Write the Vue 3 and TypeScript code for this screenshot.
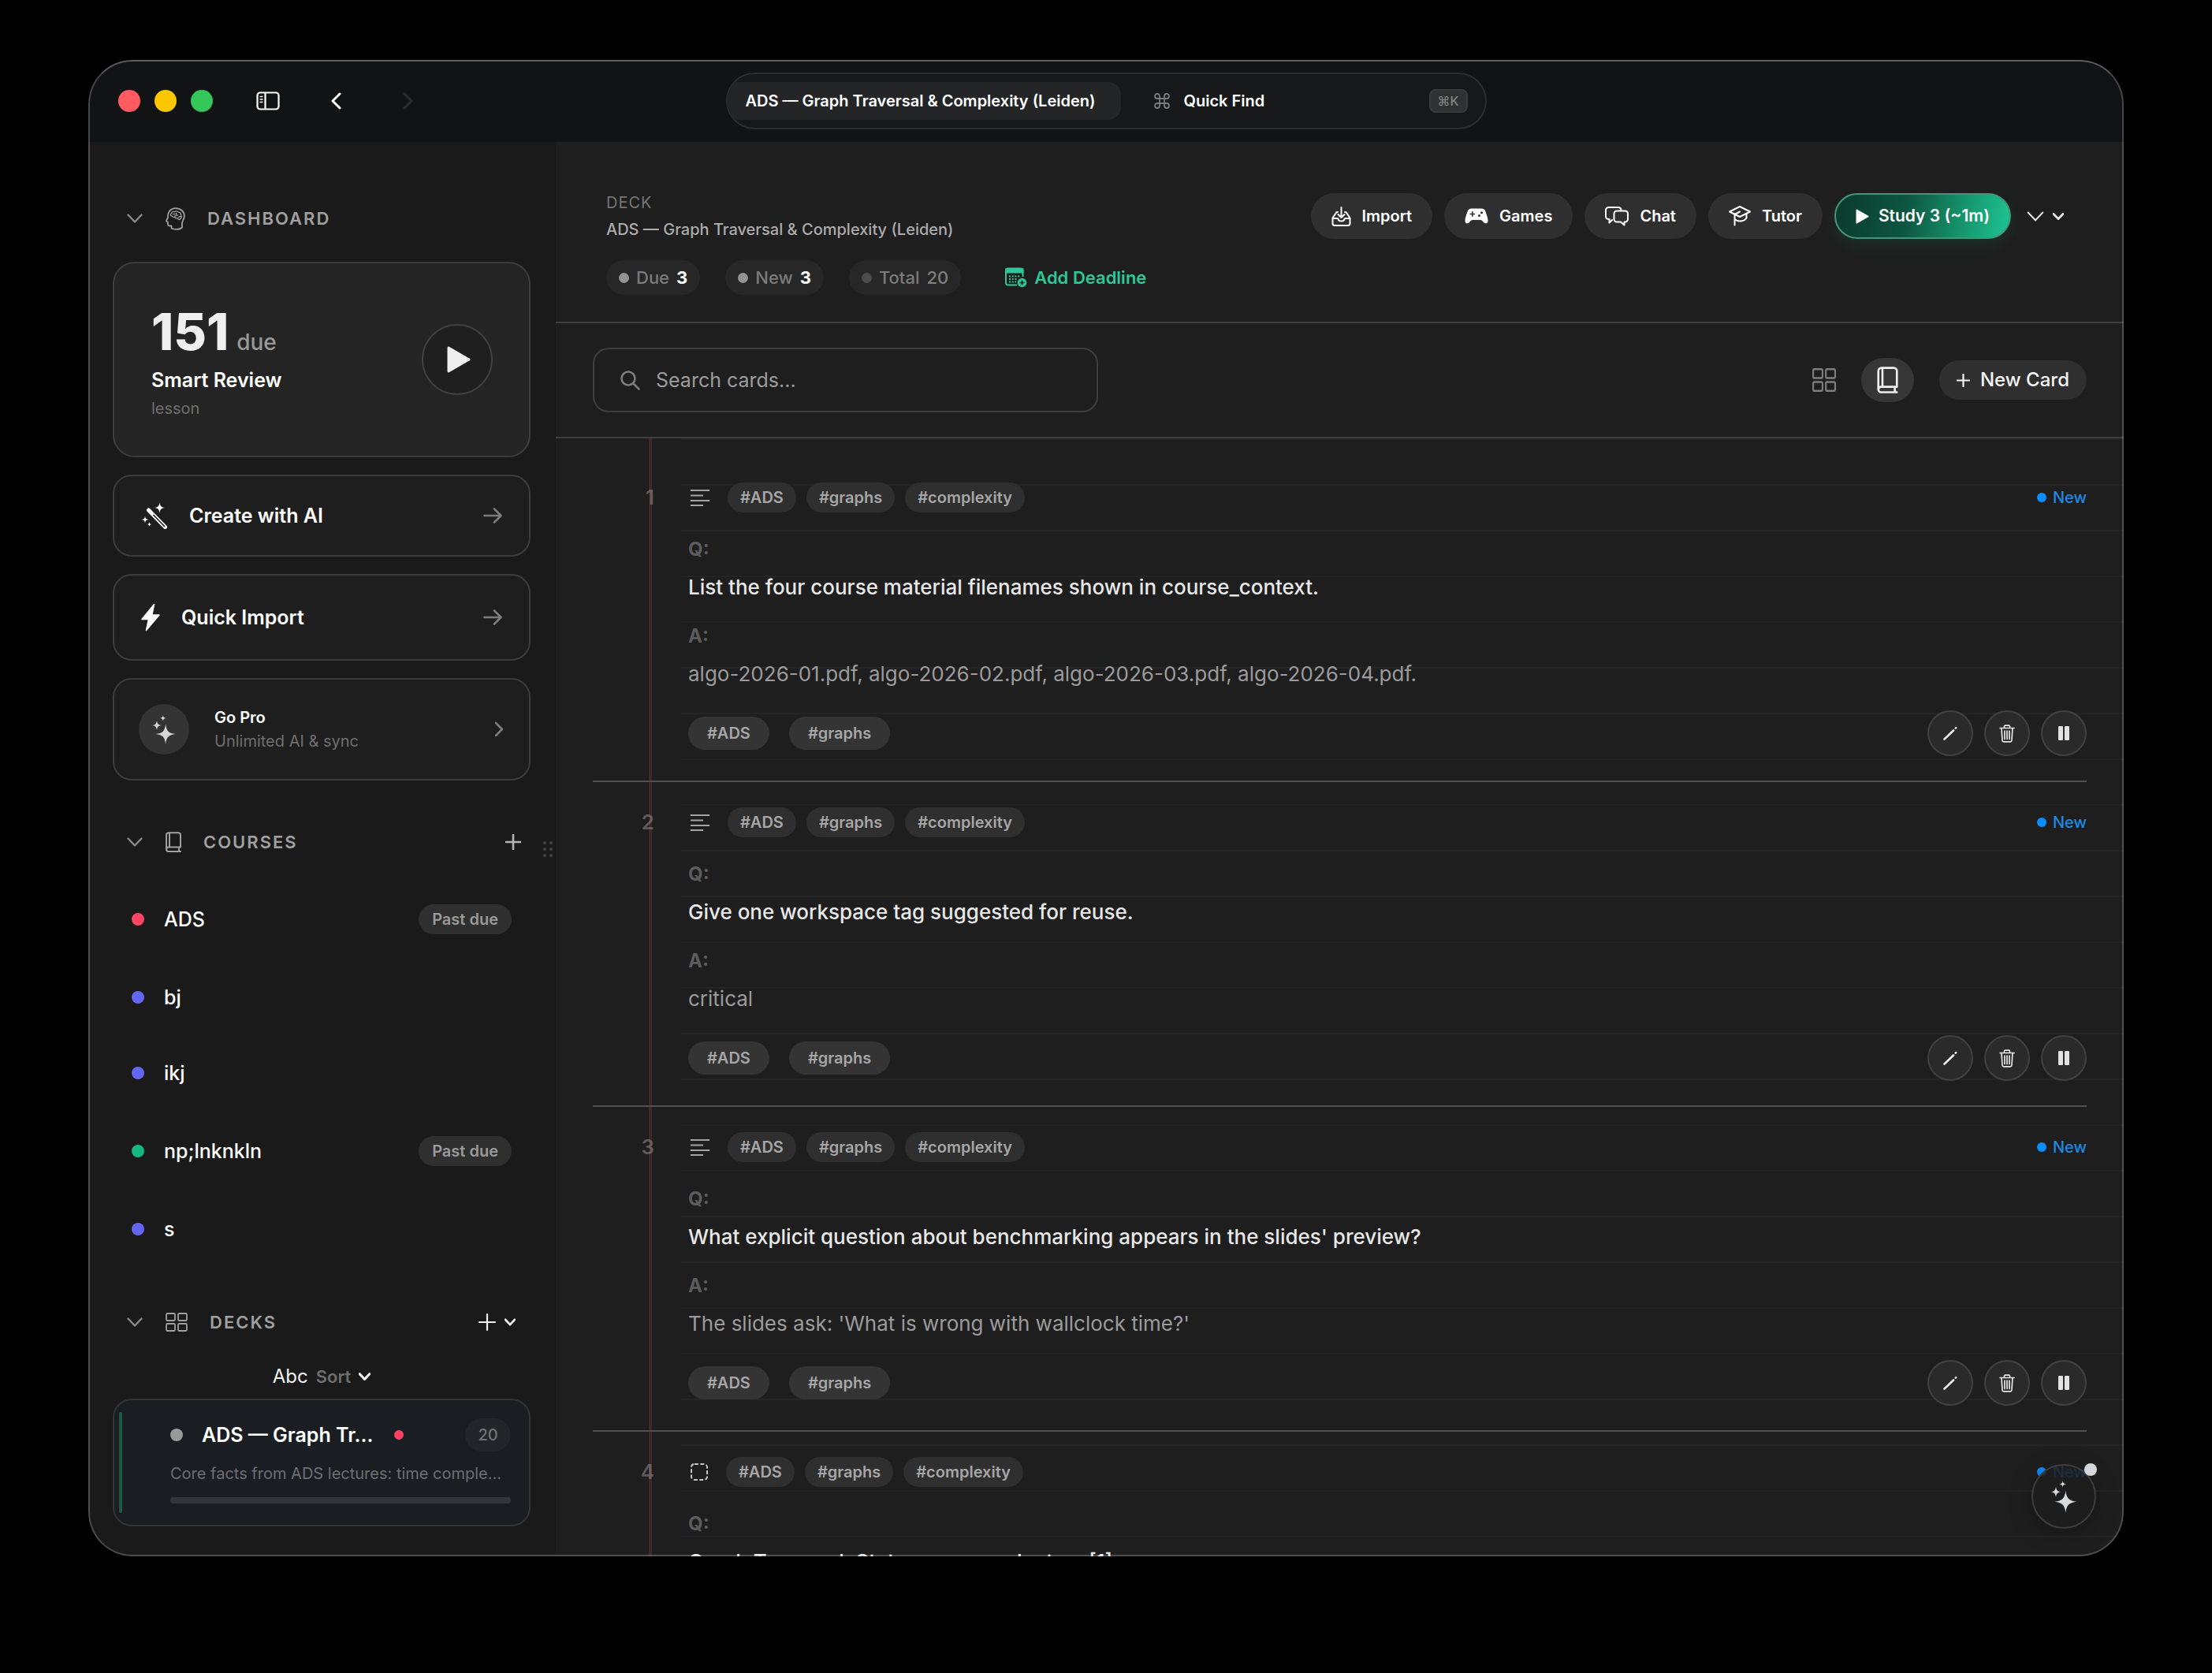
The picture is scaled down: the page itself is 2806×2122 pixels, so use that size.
<script setup lang="ts">
import { ref } from 'vue'

interface Course {
  name: string
  color: string
  pastDue?: boolean
}

interface Card {
  kind: 'basic' | 'cloze'
  question: string
  answer?: string
}

const deckTitle = 'ADS — Graph Traversal & Complexity (Leiden)'
const query = ref('')

const courses: Course[] = [
  { name: 'ADS', color: '#fb4562', pastDue: true },
  { name: 'bj', color: '#6466f1' },
  { name: 'ikj', color: '#6466f1' },
  { name: 'np;lnknkln', color: '#14b981', pastDue: true },
  { name: 's', color: '#6466f1' },
]

const headTags = ['#ADS', '#graphs', '#complexity']
const footTags = ['#ADS', '#graphs']

const cards: Card[] = [
  {
    kind: 'basic',
    question: 'List the four course material filenames shown in course_context.',
    answer: 'algo-2026-01.pdf, algo-2026-02.pdf, algo-2026-03.pdf, algo-2026-04.pdf.',
  },
  { kind: 'basic', question: 'Give one workspace tag suggested for reuse.', answer: 'critical' },
  {
    kind: 'basic',
    question: "What explicit question about benchmarking appears in the slides' preview?",
    answer: "The slides ask: 'What is wrong with wallclock time?'",
  },
  { kind: 'cloze', question: 'Graph Traversal: State space product on [1]' },
]
</script>

<template>
  <div class="desktop">
    <svg class="defs" aria-hidden="true">
      <symbol id="sparkles" viewBox="0 0 100 123">
        <path d="M57 38C61 68 69 76 99 80C69 84 61 92 57 122C53 92 45 84 15 80C45 76 53 68 57 38Z" />
        <path d="M20 23C22 37 26 41 40 43C26 45 22 49 20 63C18 49 14 45 0 43C14 41 18 37 20 23Z" />
        <path d="M46 0C47 9 50 12 59 13C50 14 47 17 46 26C45 17 42 14 33 13C42 12 45 9 46 0Z" />
      </symbol>
      <symbol id="book" viewBox="0 0 20 26">
        <path
          d="M4 1.2H16a3 3 0 0 1 3 3V19.6H4a3 3 0 0 0-3 2.7V4.2a3 3 0 0 1 3-3zM1 22.3A2.6 2.6 0 0 0 3.6 24.9H19M17.6 19.8c-1 1.600-1 3.400.2 5M5 1.400V19.400"
          fill="none" stroke="currentColor" stroke-linecap="round" stroke-linejoin="round"
        />
      </symbol>
      <symbol id="grid" viewBox="0 0 28 24" preserveAspectRatio="none">
        <g fill="none" stroke="currentColor">
          <rect x="1" y="1" width="11" height="9" rx="1.500" /><rect x="16" y="1" width="11" height="9" rx="1.500" />
          <rect x="1" y="14" width="11" height="9" rx="1.500" /><rect x="16" y="14" width="11" height="9" rx="1.500" />
        </g>
      </symbol>
      <symbol id="chevron" viewBox="0 0 20 12">
        <path d="M1.500 1.500L10 10.500L18.500 1.500" fill="none" stroke="currentColor" stroke-linecap="round" stroke-linejoin="round" />
      </symbol>
      <symbol id="arrow" viewBox="0 0 24 20">
        <path d="M1.500 10H22M14 1.500L22.500 10L14 18.500" fill="none" stroke="currentColor" stroke-width="2.600" stroke-linecap="round" stroke-linejoin="round" />
      </symbol>
      <symbol id="plus" viewBox="0 0 20 20">
        <path d="M10 1V19M1 10H19" fill="none" stroke="currentColor" stroke-linecap="round" />
      </symbol>
    </svg>

    <div class="window">
      <header class="titlebar">
        <div class="controls">
          <div class="lights">
            <button class="light red" aria-label="Close"></button>
            <button class="light yellow" aria-label="Minimise"></button>
            <button class="light green" aria-label="Zoom"></button>
          </div>
          <button class="plain panel" aria-label="Toggle sidebar">
            <svg width="30" height="24" viewBox="0 0 30 24" fill="none" stroke="#fff" stroke-width="2.200">
              <rect x="1.500" y="1.500" width="27" height="21" rx="3.500" /><path d="M11.500 2V22" />
              <path d="M4.500 6.500H8.500M4.500 10H8.500M4.500 13.500H8.500" stroke-width="1.600" />
            </svg>
          </button>
          <button class="plain back" aria-label="Back">
            <svg width="14" height="22" viewBox="0 0 14 22" fill="none" stroke="#fff" stroke-width="3" stroke-linecap="round" stroke-linejoin="round"><path d="M12 2L3 11L12 20" /></svg>
          </button>
          <button class="plain forward" aria-label="Forward">
            <svg width="14" height="22" viewBox="0 0 14 22" fill="none" stroke="#2b2c2e" stroke-width="3" stroke-linecap="round" stroke-linejoin="round"><path d="M2 2L11 11L2 20" /></svg>
          </button>
        </div>

        <div class="capsule">
          <button class="tab">{{ deckTitle }}</button>
          <button class="quick">
            <svg width="20" height="20" viewBox="0 0 20 20" fill="none" stroke="#7a7b7c" stroke-width="1.800">
              <path d="M7 7V4a3 3 0 1 0-3 3H16a3 3 0 1 0-3-3V16a3 3 0 1 0 3-3H4a3 3 0 1 0 3 3V7" />
            </svg>
            <span>Quick Find</span>
            <kbd>⌘K</kbd>
          </button>
        </div>
      </header>

      <div class="body">
        <aside class="sidebar">
          <h2 class="section dash">
            <svg class="caret" width="20" height="12" stroke-width="2.400"><use href="#chevron" /></svg>
            <svg width="25" height="29" viewBox="0 0 25 29" fill="none" stroke="currentColor" stroke-width="1.800" stroke-linejoin="round" stroke-linecap="round">
              <path d="M7.500 23.500H5C3.600 23.500 3 22.700 3 21.600V18.800L1.500 18C1 17.600 1 17 1.300 16.400L3 12.800C2.400 6 6.300 1.200 13 1.200C19.300 1.200 23.800 5.400 23.800 11C23.800 15.200 21 17 21 20.500V25.500C19.500 27 17 27.800 14 27.800C11 27.800 8.500 27.200 7.500 26.400Z" />
              <path d="M7.500 10.800C5.800 10.300 6 8 7.600 7.600C7.800 5.600 10 4.800 11.500 5.800C13 4.500 15.500 4.700 16.300 6.200C18.300 6.200 19.800 7.800 19.400 9.800C20.700 11 20.500 13.400 18.900 14.200C18.700 15.400 17.600 15.800 16.700 15.200C15.500 15 15.300 13.600 14.300 13.400C13 14 11.800 13.400 11.700 12.200C10 12.600 8.600 12 7.500 10.800ZM9.500 8.600H12M13.500 7.500C13.200 9 14 10 15.300 10M11.700 12.200C11.700 11 12.500 10.500 13.300 10.600M16.500 12.600C17 11.600 18 11.400 18.900 11.700" stroke-width="1.300" />
            </svg>
            <span>DASHBOARD</span>
          </h2>

          <div class="stack">
            <section class="panel-card review">
              <div class="review-text">
                <p class="count"><strong>151</strong><span>due</span></p>
                <h3>Smart Review</h3>
                <p class="hint">lesson</p>
              </div>
              <button class="play" aria-label="Start review">
                <svg width="32" height="36" viewBox="0 0 32 36" fill="#efefef" stroke="#efefef" stroke-width="3" stroke-linejoin="round"><path d="M3 3L29 18L3 33Z" /></svg>
              </button>
            </section>

            <button class="panel-card action create">
              <svg width="34" height="34" viewBox="0 0 34 34" fill="#fff">
                <path d="M9.500 10L30.500 31.500" stroke="#fff" stroke-width="5" stroke-linecap="round" />
                <path d="M15.500 16L30 31" stroke="#1e1e1e" stroke-width="1.600" />
                <path d="M23.500 0C24.200 5 25.200 6.200 30 7C25.200 7.800 24.200 9 23.500 14C22.800 9 21.800 7.800 17 7C21.800 6.200 22.800 5 23.500 0Z" />
                <path d="M5 17.500C5.500 20.800 6.200 21.500 9.500 22C6.200 22.500 5.500 23.200 5 26.500C4.500 23.200 3.800 22.500.5 22C3.800 21.500 4.500 20.800 5 17.500Z" />
                <path d="M10.500 25C10.800 27.200 11.300 27.700 13.500 28C11.300 28.300 10.800 28.800 10.500 31C10.200 28.800 9.700 28.300 7.500 28C9.700 27.700 10.200 27.200 10.500 25Z" />
              </svg>
              <span>Create with AI</span>
              <svg class="end" width="24" height="20"><use href="#arrow" /></svg>
            </button>

            <button class="panel-card action import">
              <svg width="24" height="36" viewBox="0 0 24 36" fill="#fff" stroke="#fff" stroke-width="1.500" stroke-linejoin="round"><path d="M16.500 1.500L1 20.500H9.500L6.500 34.500L23 15H13.800Z" /></svg>
              <span>Quick Import</span>
              <svg class="end" width="24" height="20"><use href="#arrow" /></svg>
            </button>

            <button class="panel-card pro">
              <span class="pro-icon"><svg width="30" height="37"><use href="#sparkles" /></svg></span>
              <span class="pro-text"><b>Go Pro</b><small>Unlimited AI &amp; sync</small></span>
              <svg class="end" width="12" height="20" viewBox="0 0 12 20" fill="none" stroke="currentColor" stroke-width="2.600" stroke-linecap="round" stroke-linejoin="round"><path d="M2 2L10 10L2 18" /></svg>
            </button>
          </div>

          <h2 class="section courses-head">
            <svg class="caret" width="20" height="12" stroke-width="2.400"><use href="#chevron" /></svg>
            <svg width="20" height="26" stroke-width="2"><use href="#book" /></svg>
            <span>COURSES</span>
            <button class="plain end" aria-label="Add course"><svg width="20" height="20" stroke-width="2.600"><use href="#plus" /></svg></button>
          </h2>
          <ul class="courses">
            <li v-for="c in courses" :key="c.name">
              <button class="course" :class="{ tall: c.pastDue }">
                <i class="dot" :style="{ background: c.color }"></i>
                <span>{{ c.name }}</span>
                <em v-if="c.pastDue">Past due</em>
              </button>
            </li>
          </ul>

          <h2 class="section decks-head">
            <svg class="caret" width="20" height="12" stroke-width="2.400"><use href="#chevron" /></svg>
            <svg width="28" height="24" stroke-width="1.800"><use href="#grid" /></svg>
            <span>DECKS</span>
            <button class="plain end add-deck" aria-label="Add deck">
              <svg width="22" height="22" stroke-width="2"><use href="#plus" /></svg>
              <svg width="14" height="10" stroke-width="4"><use href="#chevron" /></svg>
            </button>
          </h2>
          <button class="plain sort">
            <span class="abc">Abc</span><b>Sort</b>
            <svg width="15" height="10" stroke-width="4"><use href="#chevron" /></svg>
          </button>
          <button class="deck">
            <i class="bar"></i>
            <span class="deck-body">
              <span class="deck-row">
                <i class="dot grey"></i>
                <b>ADS — Graph Tr…</b>
                <i class="dot alert"></i>
                <em>20</em>
              </span>
              <span class="deck-desc">Core facts from ADS lectures: time comple…</span>
              <span class="track"></span>
            </span>
          </button>

          <div class="grip" role="separator" aria-label="Resize sidebar"><i v-for="n in 6" :key="n"></i></div>
        </aside>

        <main class="main">
          <header class="deck-header">
            <div>
              <p class="eyebrow">DECK</p>
              <h1>{{ deckTitle }}</h1>
              <div class="stats">
                <span class="stat"><i></i>Due <b>3</b></span>
                <span class="stat"><i></i>New <b>3</b></span>
                <span class="stat dim"><i></i>Total <b>20</b></span>
                <button class="deadline">
                  <svg width="28" height="26" viewBox="0 0 28 26" fill="none" stroke="currentColor" stroke-width="2">
                    <path d="M22.500 12V4.500A3 3 0 0 0 19.500 1.500H4A3 3 0 0 0 1 4.500V19.500A3 3 0 0 0 4 22.500H15" />
                    <path d="M1 2.500H22.500V6.500H1Z" fill="currentColor" />
                    <path d="M5 11.500H19M5 15H15M5 18.500H14" stroke-dasharray="2 1.700" />
                    <circle cx="21.500" cy="19.500" r="5.800" fill="currentColor" stroke="none" />
                    <path d="M21.500 16.500V22.500M18.500 19.500H24.500" stroke="#1e1e1e" stroke-width="1.600" />
                  </svg>
                  Add Deadline
                </button>
              </div>
            </div>

            <nav class="actions" aria-label="Deck actions">
              <button class="pill">
                <svg width="25" height="25" viewBox="0 0 25 25" fill="none" stroke="currentColor" stroke-width="2" stroke-linecap="round" stroke-linejoin="round">
                  <path d="M12.500 1V13.500M8.500 10L12.500 14L16.500 10M8 7H6.500L1.500 14.500V21.500A2.400 2.400 0 0 0 4 24H21A2.400 2.400 0 0 0 23.500 21.500V14.500L18.500 7H17M1.500 15H7.500C8.300 15 8.500 15.600 8.500 16C9 17.800 10.500 18.600 12.500 18.600C14.500 18.600 16 17.800 16.500 16C16.500 15.600 16.700 15 17.500 15H23.500" />
                </svg>
                Import
              </button>
              <button class="pill">
                <svg width="30" height="20" viewBox="0 0 30 20" fill="currentColor" fill-rule="evenodd">
                  <path d="M9 .5H21C24 .5 25.500 1.500 26.500 4.500C28.200 9.200 29.800 14 29.500 16.500C29.200 19.800 26 20.200 24 18C22.500 16.200 21.500 15 20 15H10C8.500 15 7.500 16.200 6 18C4 20.200.8 19.800.5 16.500C.2 14 1.800 9.200 3.500 4.500C4.500 1.500 6 .5 9 .5ZM9 4.200V6.700H6.500V8.300H9V10.800H10.600V8.300H13.100V6.700H10.600V4.200ZM21.500 4.200A1.500 1.500 0 1 0 21.500 7.200A1.500 1.500 0 1 0 21.500 4.200ZM18.500 8A1.500 1.500 0 1 0 18.500 11A1.500 1.500 0 1 0 18.500 8Z" />
                </svg>
                Games
              </button>
              <button class="pill">
                <svg width="30" height="25" viewBox="0 0 30 25" fill="none" stroke="currentColor" stroke-width="2" stroke-linecap="round" stroke-linejoin="round">
                  <path d="M9 17L5.500 20.500V16H4.500A3.500 3.500 0 0 1 1 12.500V4.500A3.500 3.500 0 0 1 4.500 1H17A3.500 3.500 0 0 1 20.500 4.500" />
                  <path d="M15 5.500H25.500A3.500 3.500 0 0 1 29 9V16A3.500 3.500 0 0 1 25.500 19.500H24.500V23.500L20 19.500H15A3.500 3.500 0 0 1 11.500 16V9A3.500 3.500 0 0 1 15 5.500Z" />
                </svg>
                Chat
              </button>
              <button class="pill">
                <svg width="28" height="26" viewBox="0 0 28 26" fill="none" stroke="currentColor" stroke-width="2" stroke-linecap="round" stroke-linejoin="round">
                  <path d="M14 1L27 7.500L14 14L1 7.500ZM14 7.500L7.500 11V24.500M7.500 17C9.500 18.800 11.500 19.500 14 19.500C18 19.500 21 18 22.500 15.500V10" />
                </svg>
                Tutor
              </button>
              <button class="pill study">
                <svg width="17" height="19" viewBox="0 0 17 19" fill="currentColor" stroke="currentColor" stroke-width="2" stroke-linejoin="round"><path d="M1.500 1.500L15.500 9.500L1.500 17.500Z" /></svg>
                Study 3 (~1m)
              </button>
              <button class="plain more" aria-label="More actions">
                <svg width="22" height="13" stroke-width="2"><use href="#chevron" /></svg>
                <svg width="14" height="9" stroke-width="4"><use href="#chevron" /></svg>
              </button>
            </nav>
          </header>

          <div class="toolbar">
            <label class="search">
              <svg width="25" height="25" viewBox="0 0 25 25" fill="none" stroke="#7d7d7d" stroke-width="2.600" stroke-linecap="round"><circle cx="10" cy="10" r="8.500" /><path d="M16.500 16.500L23.500 23.500" /></svg>
              <input v-model="query" type="search" placeholder="Search cards..." aria-label="Search cards" />
            </label>
            <div class="views">
              <button class="plain grid-view" aria-label="Grid view"><svg width="30" height="30" stroke-width="2"><use href="#grid" /></svg></button>
              <button class="book-view" aria-label="Notebook view"><svg width="27" height="34" stroke-width="2"><use href="#book" /></svg></button>
              <button class="new-card"><svg width="17" height="17" stroke-width="2.600"><use href="#plus" /></svg>New Card</button>
            </div>
          </div>

          <ol class="notebook">
            <li v-for="(card, i) in cards" :key="i" class="entry">
              <span class="num">{{ i + 1 }}</span>
              <article>
                <div class="entry-head">
                  <svg v-if="card.kind === 'basic'" class="kind" width="28" height="22" viewBox="0 0 28 22" stroke="#a3a3a3" stroke-width="2"><path d="M3 2H27M3 8.500H19M3 15H27M3 21H19" /></svg>
                  <svg v-else class="kind" width="26" height="24" viewBox="0 0 26 24" fill="none" stroke="#c4c4c4" stroke-width="2"><rect x="4" y="2" width="20" height="20" rx="4" stroke-dasharray="5 2.400" /></svg>
                  <span v-for="t in headTags" :key="t" class="tag">{{ t }}</span>
                  <span class="state"><i></i>New</span>
                </div>
                <p class="mark">Q:</p>
                <h3 class="question">{{ card.question }}</h3>
                <template v-if="card.answer">
                  <p class="mark second">A:</p>
                  <p class="answer">{{ card.answer }}</p>
                  <div class="entry-foot">
                    <span v-for="t in footTags" :key="t" class="tag big">{{ t }}</span>
                    <div class="tools">
                      <button aria-label="Edit card"><svg width="18" height="18" viewBox="0 0 18 18" stroke="#f0f0f0" stroke-width="2.600" stroke-linecap="round"><path d="M1.500 16.500L13 5.500M15.800 2.600L16.200 2.200" /></svg></button>
                      <button aria-label="Delete card">
                        <svg width="20" height="23" viewBox="0 0 20 23" fill="none" stroke="#e6e6e6" stroke-width="1.700" stroke-linecap="round" stroke-linejoin="round">
                          <path d="M1 4.500H19M6.500 4.500V2.500A1.300 1.300 0 0 1 7.800 1.200H12.200A1.300 1.300 0 0 1 13.500 2.500V4.500M3 4.500L4 20A2 2 0 0 0 6 21.800H14A2 2 0 0 0 16 20L17 4.500M7 8V18.500M10 8V18.500M13 8V18.500" />
                        </svg>
                      </button>
                      <button aria-label="Suspend card"><svg width="14" height="18" viewBox="0 0 14 18" fill="#e2e2e2"><rect width="6" height="18" rx="1.200" /><rect x="8" width="6" height="18" rx="1.200" /></svg></button>
                    </div>
                  </div>
                </template>
              </article>
            </li>
          </ol>
        </main>
      </div>

      <button class="fab" aria-label="AI assistant">
        <svg width="34" height="41"><use href="#sparkles" /></svg>
        <i></i>
      </button>
    </div>
  </div>
</template>

<style>
body {
  margin: 0;
  background: #000;
}
</style>

<style scoped>
* {
  box-sizing: border-box;
}
button {
  margin: 0;
  padding: 0;
  border: 0;
  background: none;
  color: inherit;
  font: inherit;
  cursor: pointer;
}
h1, h2, h3, p, ul, ol {
  margin: 0;
  padding: 0;
  list-style: none;
}
svg {
  display: block;
  flex: none;
}
i, em {
  font-style: normal;
}
.defs {
  position: absolute;
  width: 0;
  height: 0;
}
.desktop {
  height: 100vh;
  padding: 76px 112px 148px;
  background: #000;
  color: #fff;
  font: 400 20px/28px Inter, "Liberation Sans", sans-serif;
}
.window {
  position: relative;
  display: flex;
  flex-direction: column;
  height: 100%;
  overflow: hidden;
  border-radius: 56px;
  background: #1e1e1e;
}
.window::after {
  content: "";
  position: absolute;
  inset: 0;
  border: 2px solid rgba(255, 255, 255, 0.22);
  border-top-color: rgba(255, 255, 255, 0.32);
  border-radius: 56px;
  pointer-events: none;
}

/* Title bar */
.titlebar {
  flex: none;
  display: grid;
  grid-template-columns: 1fr minmax(0, 965px) 1fr;
  align-items: center;
  height: 104px;
  background: #121315;
}
.controls {
  display: flex;
  align-items: center;
  padding-left: 38px;
}
.lights {
  display: flex;
  gap: 18px;
}
.light {
  width: 28px;
  height: 28px;
  border-radius: 50%;
}
.red { background: #ff5b60; }
.yellow { background: #fbc800; }
.green { background: #35c759; }
.panel { margin-left: 55px; }
.back { margin-left: 64px; }
.forward { margin-left: 78px; }
.capsule {
  display: flex;
  align-items: center;
  height: 72px;
  overflow: hidden;
  border: 2px solid #2b2d2f;
  border-radius: 36px;
  background: #16181a;
  font-weight: 600;
}
.tab {
  height: 48px;
  padding: 0 32px 0 23px;
  border-radius: 0 16px 16px 0;
  background: #232527;
  white-space: nowrap;
}
.quick {
  flex: 1;
  display: flex;
  align-items: center;
  gap: 18px;
  padding: 0 22px 0 42px;
}
kbd {
  margin-left: auto;
  width: 49px;
  height: 30px;
  border: 2px solid #3a3b3d;
  border-radius: 8px;
  background: #303133;
  color: #818284;
  font: 500 16px/26px Inter, "DejaVu Sans", sans-serif;
  text-align: center;
}

.body {
  flex: 1;
  display: flex;
  min-height: 0;
}

/* Sidebar */
.sidebar {
  position: relative;
  flex: none;
  display: flex;
  flex-direction: column;
  width: 593px;
  padding: 0 32px 0 31px;
  background: #1a1a1a;
}
.section {
  flex: none;
  display: flex;
  align-items: center;
  height: 54px;
  padding: 0 12px 0 18px;
  color: #a0a0a0;
  font-size: 22px;
  font-weight: 600;
  letter-spacing: 2px;
}
.section > span {
  margin-left: 28px;
}
.caret {
  margin-right: 29px;
  color: #8a8a8a;
}
.end {
  margin-left: auto;
}
.dash { margin: 70px 0 28px; }
.courses-head { margin: 51px 0 20px; }
.decks-head { margin: 43px 0 22px; }
.courses-head .end { color: #b5b5b5; }
.add-deck {
  display: flex;
  align-items: center;
  gap: 11px;
  padding-right: 7px;
  color: #f0f0f0;
}
.stack {
  display: flex;
  flex-direction: column;
  gap: 22px;
}
.panel-card {
  display: flex;
  align-items: center;
  border: 2px solid #3d3d3d;
  border-radius: 24px;
  background: #1e1e1e;
  text-align: left;
}
.review {
  justify-content: space-between;
  height: 248px;
  padding: 0 46px 0 47px;
  border-radius: 28px;
  background: #242424;
}
.review-text {
  padding-top: 8px;
}
.count {
  display: flex;
  align-items: baseline;
  gap: 10px;
  line-height: 64px;
}
.count strong {
  color: #efefef;
  font-size: 64px;
  font-weight: 800;
}
.count span {
  color: #999;
  font-size: 28px;
  font-weight: 500;
}
.review h3 {
  font-size: 25px;
  line-height: 32px;
  font-weight: 600;
}
.hint {
  margin-top: 6px;
  color: #6f6f6f;
}
.play {
  display: flex;
  align-items: center;
  justify-content: center;
  width: 90px;
  height: 90px;
  padding-left: 4px;
  border: 2px solid #404040;
  border-radius: 50%;
  background: #1f1f1f;
}
.action {
  padding: 0 34px;
  font-size: 25px;
  font-weight: 600;
}
.create { height: 104px; }
.import { height: 110px; }
.action span {
  margin-left: 27px;
}
.action .end {
  color: #7c7c7c;
}
.pro {
  height: 130px;
  padding: 0 32px 0 31px;
}
.pro-icon {
  display: flex;
  align-items: center;
  justify-content: center;
  width: 64px;
  height: 64px;
  border-radius: 50%;
  background: #343434;
  fill: #d6d6d6;
}
.pro-text {
  display: flex;
  flex-direction: column;
  gap: 2px;
  margin-left: 32px;
}
.pro-text b {
  font-weight: 600;
}
.pro-text small {
  color: #6f6f6f;
  font-size: 20px;
}
.pro .end {
  color: #7c7c7c;
}
.course {
  display: flex;
  align-items: center;
  width: 100%;
  height: 96px;
  padding: 0 24px;
  font-size: 25px;
  font-weight: 500;
}
.course.tall {
  height: 102px;
}
.course span {
  margin-left: 25px;
}
.dot {
  flex: none;
  width: 16px;
  height: 16px;
  border-radius: 50%;
}
.course em {
  margin-left: auto;
  padding: 0 17px;
  border-radius: 19px;
  background: #2f2f2f;
  color: #9a9a9a;
  font-size: 20px;
  line-height: 38px;
  font-weight: 600;
}
.sort {
  display: flex;
  align-items: center;
  align-self: center;
  gap: 10px;
  height: 40px;
  color: #f0f0f0;
}
.abc {
  font-size: 24px;
}
.sort b {
  color: #6e6e6e;
  font-size: 22px;
  font-weight: 600;
}
.deck {
  flex: none;
  display: flex;
  gap: 61px;
  height: 162px;
  margin-top: 8px;
  padding: 15px 23px 15px 6px;
  border: 2px solid #333537;
  border-radius: 24px;
  background: #1a1d21;
  text-align: left;
}
.bar {
  flex: none;
  width: 4px;
  height: 128px;
  border-radius: 2px;
  background: #1b5a45;
}
.deck-body {
  flex: 1;
  display: flex;
  flex-direction: column;
  padding-top: 8px;
}
.deck-row {
  display: flex;
  align-items: center;
  height: 42px;
}
.deck-row b {
  margin: 0 27px 0 24px;
  font-size: 25px;
  font-weight: 600;
}
.deck-row em {
  margin-left: auto;
  width: 58px;
  border-radius: 21px;
  background: #22262a;
  color: #707376;
  line-height: 42px;
  font-weight: 500;
  text-align: center;
}
.grey { background: #999; }
.alert {
  width: 12px;
  height: 12px;
  background: #fb4160;
}
.deck-desc {
  margin-top: 14px;
  color: #6c6f73;
  white-space: nowrap;
}
.track {
  height: 8px;
  margin-top: 16px;
  border-radius: 4px;
  background: #32353a;
}
.grip {
  position: absolute;
  top: 50%;
  right: 4px;
  display: grid;
  grid-template-columns: 4px 4px;
  gap: 4px;
  transform: translateY(-50%);
}
.grip i {
  width: 4px;
  height: 4px;
  border-radius: 50%;
  background: #444;
}

/* Deck header */
.main {
  flex: 1;
  display: flex;
  flex-direction: column;
  min-width: 0;
}
.deck-header {
  flex: none;
  display: flex;
  align-items: flex-start;
  justify-content: space-between;
  height: 230px;
  padding: 63px 76px 0 64px;
  border-bottom: 2px solid #3f3f3f;
}
.eyebrow {
  color: #757575;
  letter-spacing: 1px;
}
h1 {
  margin-top: 6px;
  color: #acacac;
  font-size: 20px;
  font-weight: 500;
}
.stats {
  display: flex;
  gap: 32px;
  margin-top: 25px;
}
.stat {
  display: flex;
  align-items: center;
  gap: 9px;
  height: 44px;
  padding: 0 16px;
  border-radius: 22px;
  background: #272727;
  color: #7b7b7b;
  font-size: 22px;
  font-weight: 500;
}
.stat i {
  width: 13px;
  height: 13px;
  border-radius: 50%;
  background: #939393;
}
.stat b {
  color: #fff;
  font-weight: 700;
}
.stat.dim i { background: #4c4c4c; }
.stat.dim b { color: #808080; font-weight: 500; }
.deadline {
  display: flex;
  align-items: center;
  gap: 9px;
  padding-left: 24px;
  color: #2fc798;
  font-size: 22px;
  font-weight: 600;
}
.actions {
  display: flex;
  align-items: center;
  gap: 15px;
  margin-top: 2px;
}
.pill {
  display: flex;
  align-items: center;
  gap: 14px;
  height: 58px;
  padding: 0 26px;
  border-radius: 29px;
  background: #2f2f2f;
  font-weight: 600;
}
.study {
  gap: 12px;
  padding: 0 25px;
  border: 2px solid #43957a;
  background: linear-gradient(100deg, #0b3a2d, #0d5541 40%, #159068 70%, #1fc493);
  box-shadow: 0 8px 20px rgba(31, 196, 147, 0.1);
  font-size: 21px;
}
.more {
  display: flex;
  align-items: center;
  gap: 11px;
  margin-left: 5px;
  color: #e8e8e8;
}

/* Toolbar */
.toolbar {
  flex: none;
  display: flex;
  align-items: center;
  justify-content: space-between;
  height: 146px;
  padding: 0 47px;
  border-bottom: 2px solid #3f3f3f;
}
.search {
  display: flex;
  align-items: center;
  gap: 20px;
  width: 641px;
  height: 82px;
  padding: 0 33px;
  border: 2px solid #3e3e3e;
  border-radius: 20px;
}
.search input {
  flex: 1;
  min-width: 0;
  padding: 0;
  border: 0;
  outline: 0;
  background: none;
  color: #fff;
  font: 400 25px/32px Inter, "Liberation Sans", sans-serif;
}
.search input::placeholder {
  color: #9c9c9c;
  opacity: 1;
}
.views {
  display: flex;
  align-items: center;
  gap: 32px;
}
.grid-view {
  color: #7d7d7d;
}
.book-view {
  display: flex;
  align-items: center;
  justify-content: center;
  width: 67px;
  height: 56px;
  border-radius: 28px;
  background: #363636;
  color: #f0f0f0;
}
.new-card {
  display: flex;
  align-items: center;
  gap: 13px;
  height: 50px;
  padding: 0 22px;
  border-radius: 25px;
  background: #2f2f2f;
  color: #f4f4f4;
  font-size: 24px;
  font-weight: 500;
}

/* Ruled notebook */
.notebook {
  flex: 1;
  min-height: 0;
  overflow: hidden;
  padding: 24px 47px 0;
  background:
    linear-gradient(#3e2727, #3e2727) 118px 0 / 4px 100% no-repeat,
    linear-gradient(#252525 2px, transparent 2px) 159px 58px / 100% 58px repeat-y;
}
.entry {
  display: flex;
  gap: 43px;
  padding: 32px 0 31px;
  border-bottom: 2px solid #505050;
}
.num {
  width: 78px;
  color: rgba(158, 148, 148, 0.5);
  font-size: 26px;
  line-height: 38px;
  font-weight: 600;
  text-align: right;
}
article {
  flex: 1;
  min-width: 0;
}
.entry-head {
  display: flex;
  align-items: center;
  gap: 13px;
}
.kind {
  margin-right: 9px;
}
.tag {
  padding: 0 16px;
  border-radius: 21px;
  background: #2f2f2f;
  color: #a6a6a6;
  line-height: 38px;
  font-weight: 600;
}
.tag.big {
  padding: 0 24px;
  background: #343434;
  line-height: 42px;
}
.state {
  display: flex;
  align-items: center;
  gap: 8px;
  margin-left: auto;
  color: #1f8ae0;
  font-weight: 500;
}
.state i {
  width: 12px;
  height: 12px;
  border-radius: 50%;
  background: #0a8dff;
}
.mark {
  margin-top: 31px;
  color: #5c5c5c;
  font-size: 24px;
  line-height: 32px;
  font-weight: 700;
}
.mark.second {
  margin-top: 28px;
}
.question, .answer {
  margin-top: 14px;
  font-size: 26px;
  line-height: 36px;
}
.question {
  color: #e8e8e8;
  font-weight: 550;
}
.answer {
  color: #9b9b9b;
}
.entry-foot {
  display: flex;
  align-items: center;
  gap: 25px;
  margin-top: 28px;
}
.tools {
  display: flex;
  gap: 14px;
  margin-left: auto;
}
.tools button {
  display: flex;
  align-items: center;
  justify-content: center;
  width: 58px;
  height: 58px;
  border: 2px solid #404040;
  border-radius: 50%;
  background: #2a2a2a;
}

/* Floating assistant button */
.fab {
  position: absolute;
  right: 35px;
  bottom: 35px;
  display: flex;
  align-items: center;
  justify-content: center;
  width: 82px;
  height: 82px;
  border: 2px solid #3d3d3d;
  border-radius: 50%;
  background: rgba(29, 29, 29, 0.85);
  box-shadow: 0 6px 30px rgba(0, 0, 0, 0.25);
  fill: #d9dadb;
}
.fab i {
  position: absolute;
  top: -3px;
  right: -3px;
  width: 16px;
  height: 16px;
  border-radius: 50%;
  background: #d5d6d8;
}
</style>
